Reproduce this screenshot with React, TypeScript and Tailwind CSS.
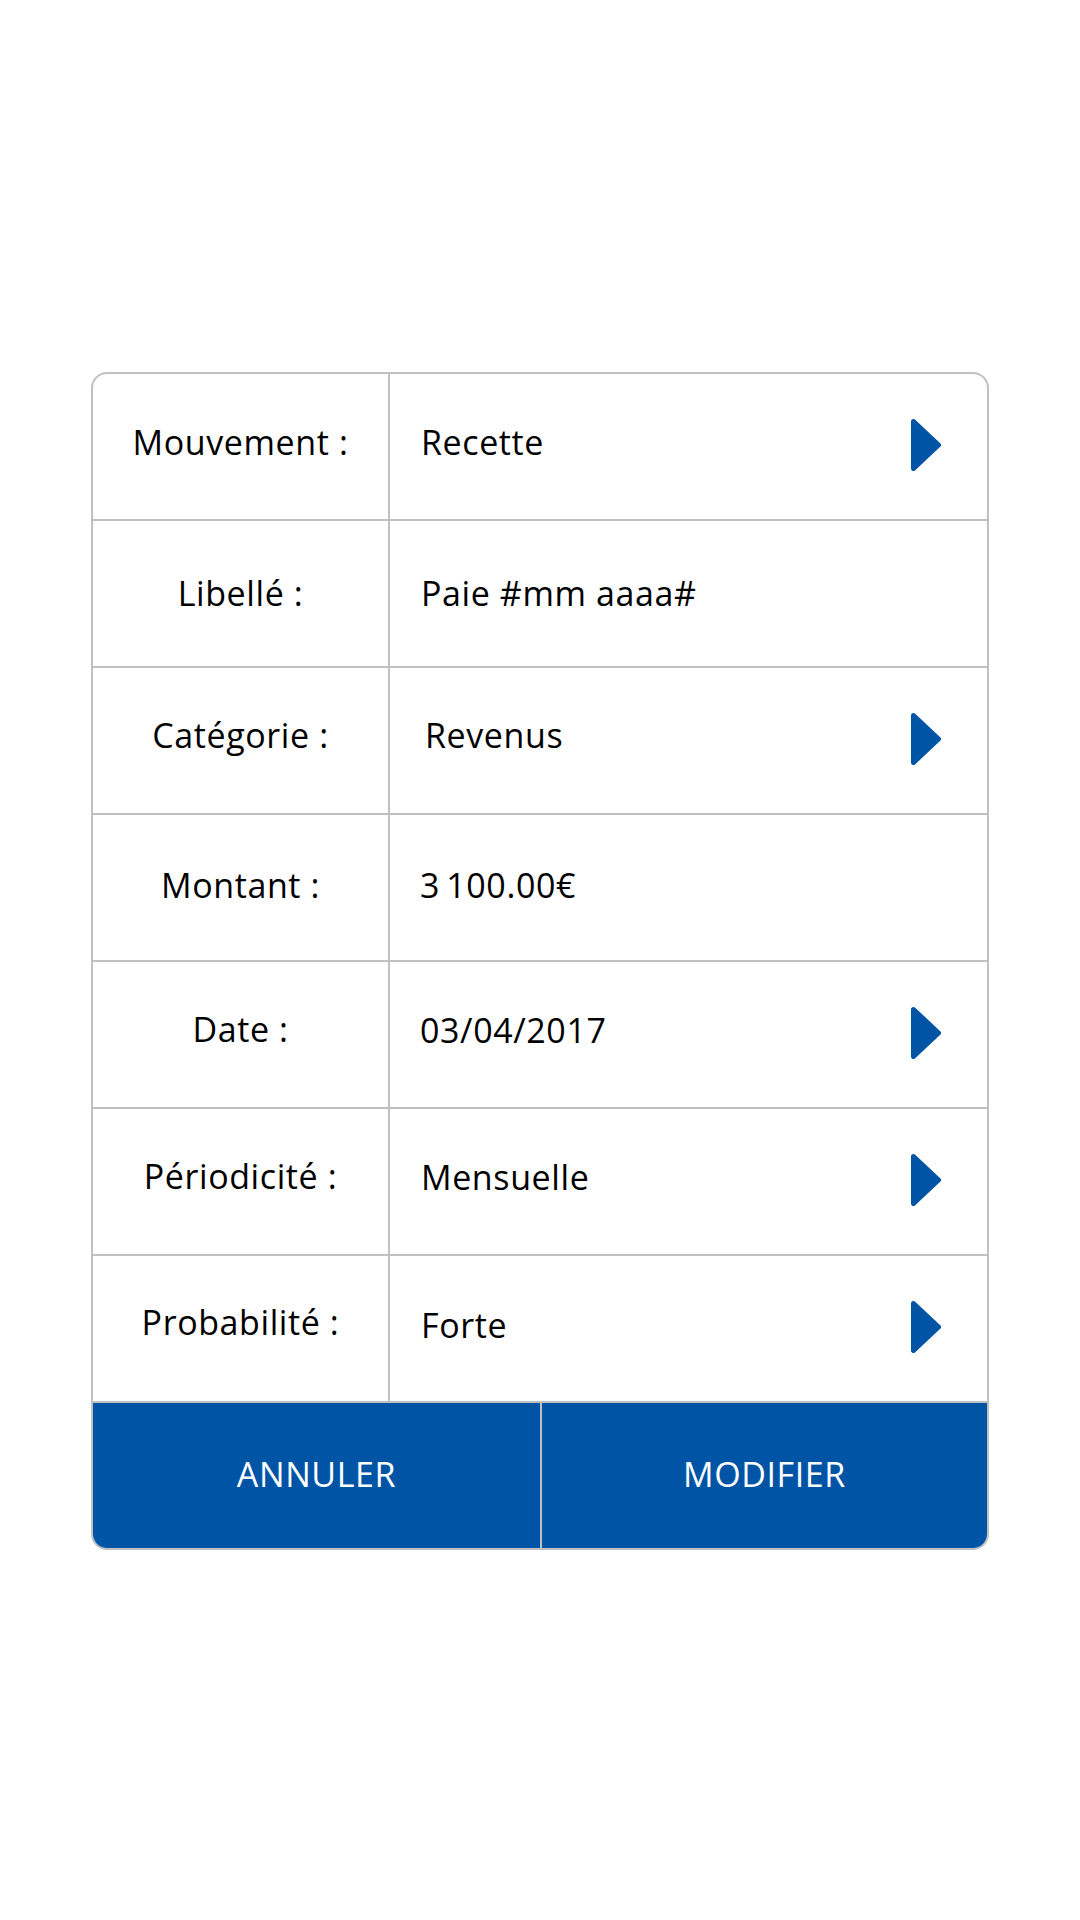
import React from "react";

type Row = {
  label: string;
  value: string;
  arrow: boolean;
  lp: string;
  vp: string;
  vx: string;
};

const rows: Row[] = [
  { label: "Mouvement :", value: "Recette", arrow: true, lp: "pb-[10px]", vp: "pb-[9px]", vx: "pl-[31px]" },
  { label: "Libellé :", value: "Paie #mm aaaa#", arrow: false, lp: "pb-[2px]", vp: "pb-[2px]", vx: "pl-[31px]" },
  { label: "Catégorie :", value: "Revenus", arrow: true, lp: "pb-[12px]", vp: "pb-[12px]", vx: "pl-[35px]" },
  { label: "Montant :", value: "3\u2009100.00€", arrow: false, lp: "pb-[5px]", vp: "pb-[5px]", vx: "pl-[30px]" },
  { label: "Date :", value: "03/04/2017", arrow: true, lp: "pb-[12px]", vp: "pb-[10px]", vx: "pl-[30px]" },
  { label: "Périodicité :", value: "Mensuelle", arrow: true, lp: "pb-[12px]", vp: "pb-[10px]", vx: "pl-[31px]" },
  { label: "Probabilité :", value: "Forte", arrow: true, lp: "pb-[13px]", vp: "pb-[7px]", vx: "pl-[31px]" },
];

function Arrow() {
  return (
    <svg width="30" height="52" viewBox="0 0 30 52" className="shrink-0 mb-[3px]">
      <polygon
        points="2.5,2.5 27.5,26 2.5,49.5"
        fill="#0054a6"
        stroke="#0054a6"
        strokeWidth="5"
        strokeLinejoin="round"
      />
    </svg>
  );
}

export default function App() {
  return (
    <div
      className="w-[1080px] h-[1920px] bg-white pt-[372px] pl-[91px] text-black"
      style={{ fontFamily: '"Open Sans", "Noto Sans", sans-serif' }}
    >
      <div className="w-[898px] border-2 border-[#c0c0c0] rounded-[16px] overflow-hidden bg-white">
        {rows.map((r) => (
          <div key={r.label} className="flex h-[147px] border-b-2 border-[#c0c0c0]">
            <div className={`w-[297px] shrink-0 border-r-2 border-[#c0c0c0] flex items-center justify-center text-[34px] tracking-[0.6px] leading-none ${r.lp}`}>
              <span>{r.label}</span>
            </div>
            <div className={`flex-1 flex items-center justify-between pr-[46px] ${r.vx}`}>
              <span className={`text-[34px] tracking-[0.6px] leading-none ${r.vp}`}>{r.value}</span>
              {r.arrow && <Arrow />}
            </div>
          </div>
        ))}
        <div className="flex h-[145px] bg-[#0054a6]">
          <div className="w-[449px] shrink-0 border-r-2 border-[#c0c0c0] flex items-center justify-center text-white text-[34px] tracking-[0.6px] leading-none pb-[3px]">
            ANNULER
          </div>
          <div className="flex-1 flex items-center justify-center text-white text-[34px] tracking-[0.6px] leading-none pb-[3px]">
            MODIFIER
          </div>
        </div>
      </div>
    </div>
  );
}
